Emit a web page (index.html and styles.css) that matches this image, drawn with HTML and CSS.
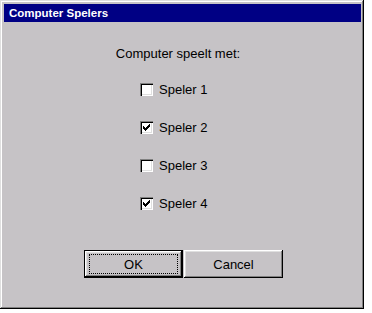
FILE: index.html
```html
<!DOCTYPE html>
<html>
<head>
<meta charset="utf-8">
<link rel="stylesheet" href="styles.css">
</head>
<body>
<div class="dialog">
  <div class="titlebar">Computer Spelers</div>
  <div class="content">
    <div class="prompt">Computer speelt met:</div>
    <div class="options">
      <label class="option"><span class="box"></span><span>Speler 1</span></label>
      <label class="option"><span class="box"><svg width="7" height="7" viewBox="0 0 7 7" shape-rendering="crispEdges"><path d="M6 0h1v1h-1zM5 1h2v1h-2zM0 2h1v1h-1zM4 2h3v1h-3zM0 3h2v1h-2zM3 3h3v1h-3zM0 4h5v1h-5zM1 5h3v1h-3zM2 6h1v1h-1z" fill="#000"/></svg></span><span>Speler 2</span></label>
      <label class="option"><span class="box"></span><span>Speler 3</span></label>
      <label class="option"><span class="box"><svg width="7" height="7" viewBox="0 0 7 7" shape-rendering="crispEdges"><path d="M6 0h1v1h-1zM5 1h2v1h-2zM0 2h1v1h-1zM4 2h3v1h-3zM0 3h2v1h-2zM3 3h3v1h-3zM0 4h5v1h-5zM1 5h3v1h-3zM2 6h1v1h-1z" fill="#000"/></svg></span><span>Speler 4</span></label>
    </div>
    <div class="buttons">
      <button class="btn default"><span class="focus">OK</span></button>
      <button class="btn">Cancel</button>
    </div>
  </div>
</div>
</body>
</html>
```
FILE: styles.css
```css
html, body {
  margin: 0;
  padding: 0;
  background: #fff;
}

.dialog {
  box-sizing: border-box;
  width: 364px;
  height: 309px;
  background: #c6c3c6;
  padding: 4px;
  box-shadow: inset -1px -1px #000, inset 1px 1px #dfdfdf, inset -2px -2px #808080, inset 2px 2px #fff;
  font-family: "Liberation Sans", Arial, sans-serif;
  color: #000;
  display: flex;
  flex-direction: column;
}

.titlebar {
  height: 18px;
  background: #000084;
  color: #fff;
  font-weight: bold;
  font-size: 11.5px;
  line-height: 18px;
  padding-left: 5px;
  margin-right: -1px;
}

.content {
  display: flex;
  flex-direction: column;
  font-size: 13px;
  line-height: 15px;
}

.prompt {
  margin-top: 24px;
  text-align: center;
  padding-right: 8px;
}

.options {
  margin-top: 21px;
  padding-left: 136px;
  display: flex;
  flex-direction: column;
  gap: 23px;
}

.option {
  display: flex;
  align-items: center;
  gap: 6px;
  height: 15px;
}

.box {
  box-sizing: border-box;
  width: 13px;
  height: 13px;
  background: #fff;
  box-shadow: inset 1px 1px #808080, inset 2px 2px #000, inset -1px -1px #fff, inset -2px -2px #dfdfdf;
  display: flex;
  align-items: center;
  justify-content: center;
}

.box svg {
  display: block;
}

.buttons {
  margin-top: 39px;
  padding-left: 80px;
  display: flex;
  gap: 1px;
}

.btn {
  box-sizing: border-box;
  width: 99px;
  height: 28px;
  margin: 0;
  padding: 0;
  border: none;
  background: #c6c3c6;
  font-family: "Liberation Sans", Arial, sans-serif;
  font-size: 13px;
  color: #000;
  display: flex;
  align-items: center;
  justify-content: center;
  box-shadow: inset -1px -1px #000, inset 1px 1px #fff, inset -2px -2px #808080, inset 2px 2px #dfdfdf;
}

.btn.default {
  box-shadow: inset 0 0 0 1px #000, inset -2px -2px #000, inset 2px 2px #fff, inset -3px -3px #808080, inset 3px 3px #dfdfdf;
  padding: 4px 5px 4px 5px;
}

.focus {
  flex: 1;
  align-self: stretch;
  border: 1px dotted #000;
  display: flex;
  align-items: center;
  justify-content: center;
}
```
